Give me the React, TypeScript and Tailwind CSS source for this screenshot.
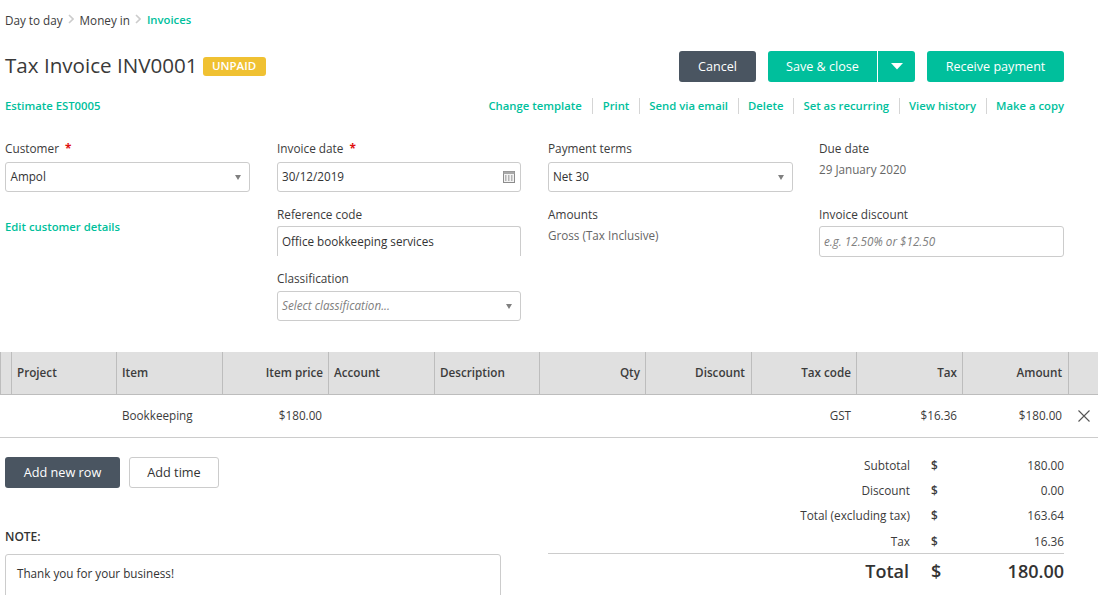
import React from "react";

const Caret = () => (
  <svg width="6" height="5" viewBox="0 0 6 5" className="shrink-0">
    <path d="M0 0h6L3 5z" fill="#808080" />
  </svg>
);

const Chevron = () => (
  <svg width="6" height="10" viewBox="0 0 6 10" className="mx-[5.5px] mb-[2px]">
    <path d="M1 1l4 4-4 4" fill="none" stroke="#cccccc" strokeWidth="1.6" />
  </svg>
);

const Calendar = () => (
  <svg width="12" height="12" viewBox="0 0 12 12">
    <rect x="0.5" y="0.5" width="11" height="11" fill="#f2f2f2" stroke="#8c8c8c" />
    <rect x="0.5" y="0.5" width="11" height="2.5" fill="#a8a8a8" />
    <path d="M2 5h1.5M5 5h1.5M8 5h1.5M2 7h1.5M5 7h1.5M8 7h1.5M2 9h1.5M5 9h1.5M8 9h1.5" stroke="#777" strokeWidth="1" />
  </svg>
);

const Label = ({ children, req }: { children: React.ReactNode; req?: boolean }) => (
  <div className="h-[13px] leading-[13px] text-[11.8px] text-[#3c3c3c] whitespace-nowrap">
    {children}
    {req && <span className="ml-[6px] text-[#e01010] font-bold">*</span>}
  </div>
);

const box = "h-[30px] w-full border border-[#cccccc] rounded-[3px] bg-white flex items-center justify-between pl-[4px] pr-[8px] text-[11.7px] text-[#333333]";

const columns = [
  { w: "w-[10px]", t: "", p: "px-[5px]" },
  { w: "w-[105px]", t: "Project", p: "px-[5px]" },
  { w: "w-[106px]", t: "Item", p: "px-[5px]" },
  { w: "w-[106px]", t: "Item price", r: true, p: "px-[5px]" },
  { w: "w-[106px]", t: "Account", p: "px-[5px]" },
  { w: "w-[105px]", t: "Description", p: "px-[5px]" },
  { w: "w-[106px]", t: "Qty", r: true, p: "px-[5px]" },
  { w: "w-[106px]", t: "Discount", r: true, p: "pr-[6px]" },
  { w: "w-[105px]", t: "Tax code", r: true, p: "px-[5px]" },
  { w: "w-[106px]", t: "Tax", r: true, p: "px-[5px]" },
  { w: "w-[106px]", t: "Amount", r: true, p: "pr-[6px]" },
];

const totals = [
  ["Subtotal", "180.00", "h-[25px]"],
  ["Discount", "0.00", "h-[25px]"],
  ["Total (excluding tax)", "163.64", "h-[26px]"],
  ["Tax", "16.36", "h-[25px]"],
];

const links = ["Change template", "Print", "Send via email", "Delete", "Set as recurring", "View history", "Make a copy"];

export default function App() {
  return (
    <div className="h-[595px] w-[1098px] overflow-hidden bg-white text-[#333333] font-['Open_Sans',sans-serif]">
      <div className="pl-[5px] pr-[34px]">
        <div className="flex items-center h-[16px] mt-[12px] text-[11.7px] leading-[16px]">
          <span className="text-[#3c3c3c]">Day to day</span>
          <Chevron />
          <span className="text-[#3c3c3c]">Money in</span>
          <Chevron />
          <span className="text-[#00bf9c] font-semibold text-[11.3px]">Invoices</span>
        </div>

        <div className="flex items-center justify-between mt-[23px] h-[31px]">
          <div className="flex items-center">
            <h1 className="text-[20.6px] leading-[28px] mb-[3px] text-[#3a3a3a] whitespace-nowrap">Tax Invoice INV0001</h1>
            <span className="ml-[5px] mt-[-1px] flex items-center justify-center w-[63px] h-[19px] rounded-[3px] bg-[#f0c132] text-white text-[11.5px] font-semibold">UNPAID</span>
          </div>
          <div className="flex items-center text-white text-[12.6px]">
            <button className="h-[31px] w-[77px] pt-[1px] rounded-[3px] bg-[#4a5561]">Cancel</button>
            <div className="ml-[12px] flex h-[31px] w-[147px] rounded-[3px] bg-[#00bf9c]">
              <button className="w-[110px] pt-[1px] border-r border-white h-[31px]">Save &amp; close</button>
              <button className="flex-1 flex items-center justify-center">
                <svg width="12" height="7" viewBox="0 0 12 7"><path d="M0 0h12L6 6.5z" fill="#fff" /></svg>
              </button>
            </div>
            <button className="ml-[12px] h-[31px] w-[137px] pt-[1px] rounded-[3px] bg-[#00bf9c]">Receive payment</button>
          </div>
        </div>

        <div className="flex items-center justify-between mt-[16px] h-[16px] text-[11.3px] font-semibold text-[#00bf9c]">
          <span>Estimate EST0005</span>
          <div className="flex items-center">
            {links.map((l, i) => (
              <span key={l} className={i === links.length - 1 ? "pl-[9px]" : i === 0 ? "pr-[10px] border-r border-[#d5d5d5]" : i === 1 ? "pl-[10px] pr-[10px] border-r border-[#d5d5d5]" : "pl-[9px] pr-[10px] border-r border-[#d5d5d5]"}>{l}</span>
            ))}
          </div>
        </div>

        <div className="grid grid-cols-[272px_271px_271px_245px] mt-[28px] h-[178px]">
          <div className="w-[245px]">
            <Label req>Customer</Label>
            <div className={`${box} mt-[7px]`}>
              <span className="ml-[0.5px]">Ampol</span>
              <Caret />
            </div>
            <div className="mt-[28px] text-[11.3px] leading-[14px] font-semibold text-[#00bf9c]">Edit customer details</div>
          </div>
          <div className="w-[244px]">
            <Label req>Invoice date</Label>
            <div className={`${box} mt-[7px]`}>
              <span>30/12/2019</span>
              <span className="-mr-[3px] flex"><Calendar /></span>
            </div>
            <div className="mt-[16px]"><Label>Reference code</Label></div>
            <div className="mt-[5px] h-[30px] w-full border-t border-x border-[#cccccc] rounded-t-[3px] flex items-center pl-[4px] text-[11.7px] text-[#333333]">Office bookkeeping services</div>
            <div className="mt-[16px]"><Label>Classification</Label></div>
            <div className={`${box} mt-[6px]`}>
              <span className="italic text-[#808080]">Select classification...</span>
              <Caret />
            </div>
          </div>
          <div className="w-[245px]">
            <Label>Payment terms</Label>
            <div className={`${box} mt-[7px]`}>
              <span>Net 30</span>
              <Caret />
            </div>
            <div className="mt-[16px]"><Label>Amounts</Label></div>
            <div className="mt-[7px] text-[11.7px] leading-[14px] text-[#666666]">Gross (Tax Inclusive)</div>
          </div>
          <div>
            <Label>Due date</Label>
            <div className="mt-[7px] text-[11.7px] leading-[14px] text-[#666666]">29 January 2020</div>
            <div className="mt-[32px]"><Label>Invoice discount</Label></div>
            <div className="mt-[5px] h-[31px] w-full border border-[#cccccc] rounded-[3px] flex items-center pl-[4px] text-[11.7px] italic text-[#808080]">e.g. 12.50% or $12.50</div>
          </div>
        </div>
      </div>

      <div className="mt-[32px]">
        <div className="flex h-[43px] bg-[#e0e0e0] border-b border-[#bdbdbd] text-[11.7px] font-semibold text-[#3c3c3c]">
          <div className="w-[1px] border-r border-[#bdbdbd]" />
          {columns.map((c) => (
            <div key={c.t || "x"} className={`${c.w} ${c.p} shrink-0 border-r border-[#bdbdbd] flex items-center ${c.r ? "justify-end" : ""}`}>
              {c.t}
            </div>
          ))}
        </div>
        <div className="flex h-[43px] items-center border-b border-[#cccccc] text-[11.7px] text-[#3c3c3c]">
          <div className="w-[122px] shrink-0" />
          <div className="w-[100px] shrink-0">Bookkeeping</div>
          <div className="w-[100px] shrink-0 text-right">$180.00</div>
          <div className="w-[529px] shrink-0 text-right">GST</div>
          <div className="w-[106px] shrink-0 text-right">$16.36</div>
          <div className="w-[105px] shrink-0 text-right">$180.00</div>
          <svg width="14" height="14" viewBox="0 0 14 14" className="ml-[15px]">
            <path d="M1.5 1.5l11 11M12.5 1.5l-11 11" stroke="#555" strokeWidth="1.1" fill="none" />
          </svg>
        </div>
      </div>

      <div className="flex justify-between pl-[5px] pr-[34px]">
        <div className="w-[496px]">
          <div className="flex mt-[19px] text-[12.7px]">
            <button className="h-[31px] w-[115px] rounded-[3px] bg-[#4a5561] text-white">Add new row</button>
            <button className="ml-[9px] h-[31px] w-[90px] rounded-[3px] border border-[#cccccc] text-[#333333]">Add time</button>
          </div>
          <div className="mt-[41px] text-[12px] leading-[16px] font-semibold text-[#333333]">NOTE:</div>
          <div className="mt-[9px] h-[60px] border border-[#cccccc] rounded-[3px] px-[11px] pt-[10px] text-[11.7px] leading-[16px] text-[#333333]">Thank you for your business!</div>
        </div>
        <div className="w-[516px] pt-[15px]">
          {totals.map(([l, v, h]) => (
            <div key={l} className={`flex items-center ${h} text-[11.8px] text-[#3c3c3c]`}>
              <span className="w-[362px] text-right">{l}</span>
              <span className="ml-[21px] font-semibold">$</span>
              <span className="flex-1 text-right">{v}</span>
            </div>
          ))}
          <div className="flex items-center h-[35px] mt-[-1px] border-t border-[#cccccc] text-[#333333] text-[18px] font-semibold">
            <span className="w-[361px] text-right">Total</span>
            <span className="ml-[22px]">$</span>
            <span className="flex-1 text-right">180.00</span>
          </div>
        </div>
      </div>
    </div>
  );
}
